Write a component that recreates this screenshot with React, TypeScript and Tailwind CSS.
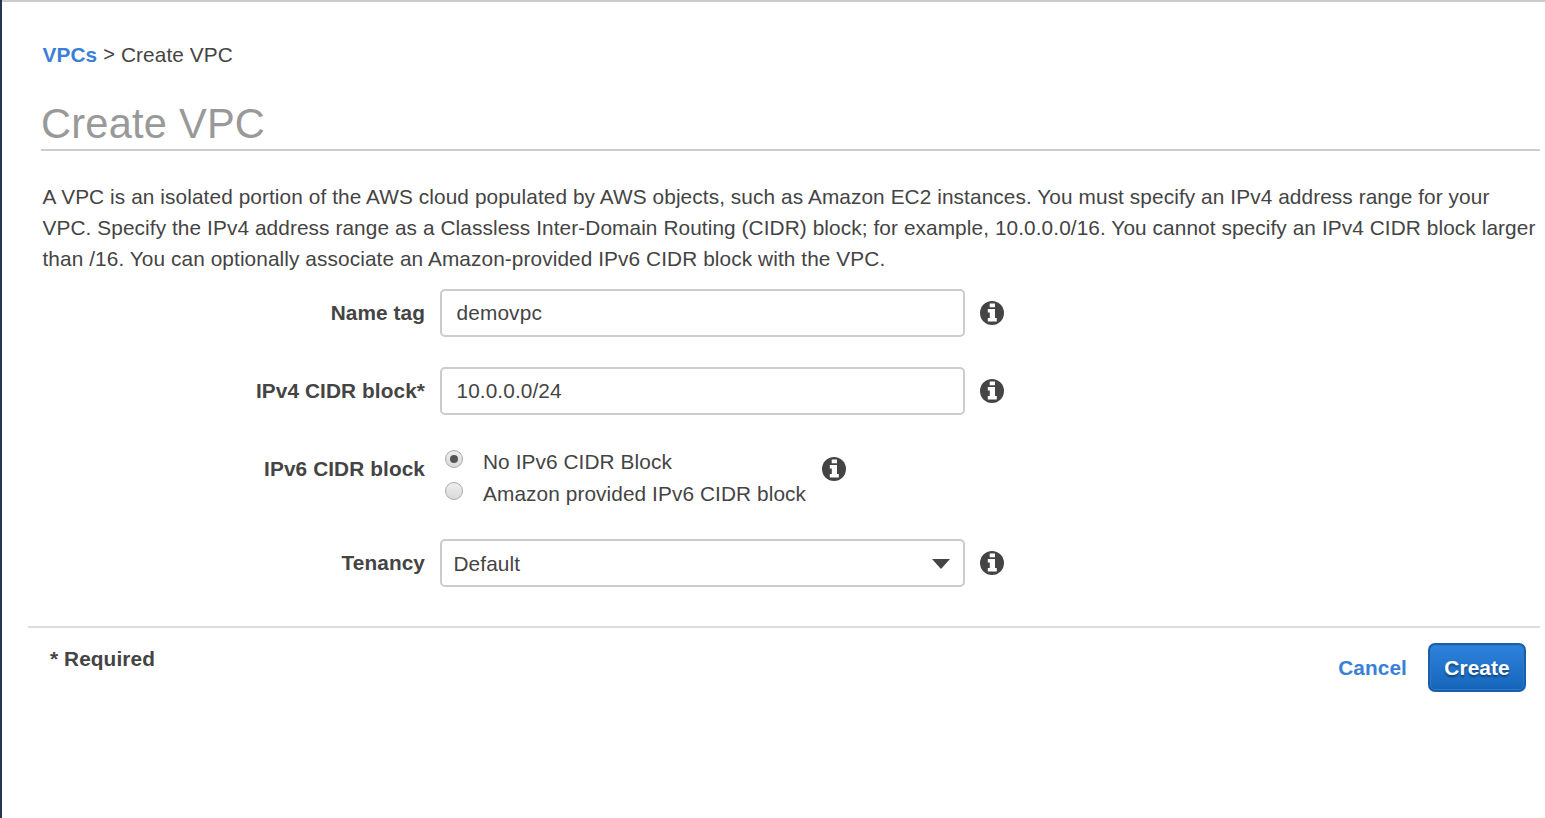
import { useState } from "react";
import type { ReactNode } from "react";

function InfoIcon() {
  return (
    <svg viewBox="0 0 24 24" className="size-6 shrink-0" aria-label="Info">
      <circle cx="12" cy="12" r="12" className="fill-[#444]" />
      <path d="M9.7 2.4h5.3v3.9H9.7zM7.8 8H15v9h1.8v3.6h-9V17h2v-5.6h-2z" className="fill-white" />
    </svg>
  );
}

function Row({ label, className, children }: { label: string; className: string; children: ReactNode }) {
  return (
    <div className={`flex items-center gap-[15px] ${className}`}>
      <div className="w-[384px] shrink-0 text-right font-bold">{label}</div>
      {children}
      <InfoIcon />
    </div>
  );
}

function Radio({ label, checked, onSelect }: { label: string; checked: boolean; onSelect: () => void }) {
  return (
    <label className="flex h-8 items-start">
      <input type="radio" name="ipv6" checked={checked} onChange={onSelect} className="sr-only" />
      <span className="mt-1 flex size-[18px] shrink-0 items-center justify-center rounded-full border border-[#aaa] bg-linear-to-b from-[#efefef] to-[#d9d9d9]">
        {checked && <span className="size-2 rounded-full bg-[#555]" />}
      </span>
      <span className="ml-5 whitespace-nowrap leading-8">{label}</span>
    </label>
  );
}

const field =
  "h-12 w-[525px] shrink-0 rounded-[5px] border-2 border-[#ccc] bg-white outline-none";

export default function App() {
  const [name, setName] = useState("demovpc");
  const [cidr, setCidr] = useState("10.0.0.0/24");
  const [ipv6, setIpv6] = useState(false);

  return (
    <div className="h-[818px] w-[1545px] overflow-hidden border-l-2 border-[#263652] bg-white font-['Liberation_Sans',Arial,sans-serif] text-[20.8px] tracking-[0.093px] text-[#444]">
      <div className="h-[2px] bg-[#ccc]" />
      <nav className="mt-[37px] flex h-8 items-center gap-[6px] pl-[40.5px]">
        <a href="#" className="font-bold text-[#3a80d6]">VPCs</a>
        <span className="relative -top-px text-[20px]">&gt;</span>
        <span>Create VPC</span>
      </nav>
      <h1 className="mr-[5px] ml-[39px] mt-[23px] h-[57px] border-b-2 border-[#ccc] text-[41.6px] leading-[59px] tracking-[0.22px] text-[#999]">
        Create VPC
      </h1>
      <p className="mt-[30px] ml-[40.5px] whitespace-nowrap leading-[31px]">
        <span className="block">A VPC is an isolated portion of the AWS cloud populated by AWS objects, such as Amazon EC2 instances. You must specify an IPv4 address range for your</span>
        <span className="block">VPC. Specify the IPv4 address range as a Classless Inter-Domain Routing (CIDR) block; for example, 10.0.0.0/16. You cannot specify an IPv4 CIDR block larger</span>
        <span className="block">than /16. You can optionally associate an Amazon-provided IPv6 CIDR block with the VPC.</span>
      </p>

      <form className="ml-[39px]">
        <Row label="Name tag" className="mt-[15px] h-12">
          <input value={name} onChange={(e) => setName(e.target.value)} className={`${field} px-[14.5px] tracking-[0.15px]`} />
        </Row>
        <Row label="IPv4 CIDR block*" className="mt-[30px] h-12">
          <input value={cidr} onChange={(e) => setCidr(e.target.value)} className={`${field} px-[14.5px]`} />
        </Row>
        <Row label="IPv6 CIDR block" className="mt-[30px] h-12">
          <div className="w-[367px] shrink-0 self-start pt-px pl-[5px]">
            <Radio label="No IPv6 CIDR Block" checked={!ipv6} onSelect={() => setIpv6(false)} />
            <Radio label="Amazon provided IPv6 CIDR block" checked={ipv6} onSelect={() => setIpv6(true)} />
          </div>
        </Row>
        <Row label="Tenancy" className="mt-[46px] h-12">
          <button type="button" className={`${field} flex items-center justify-between pr-[13px] pl-[11.5px]`}>
            <span className="pt-0.5">Default</span>
            <svg viewBox="0 0 18 10" className="mt-px h-[10px] w-[18px] fill-[#444]">
              <path d="M0 0h18L9 10z" />
            </svg>
          </button>
        </Row>
      </form>

      <footer className="mt-[39px] mr-[5px] ml-[26px] flex items-start justify-between border-t-2 border-[#ddd]">
        <span className="mt-[15px] ml-[22px] font-bold leading-8">* Required</span>
        <div className="mt-[15px] mr-[14px] flex items-center gap-[21px] font-bold">
          <a href="#" className="text-[#3a80d6]">Cancel</a>
          <button
            type="button"
            className="h-[49px] w-[98px] rounded-[7px] border-2 border-[#1b5fa8] bg-linear-to-b from-[#2f82dc] to-[#1465ba] text-white shadow-[inset_0_0_0_1px_#2c78cb] [text-shadow:0_2px_2px_rgba(0,0,0,0.4)]"
          >
            Create
          </button>
        </div>
      </footer>
    </div>
  );
}
